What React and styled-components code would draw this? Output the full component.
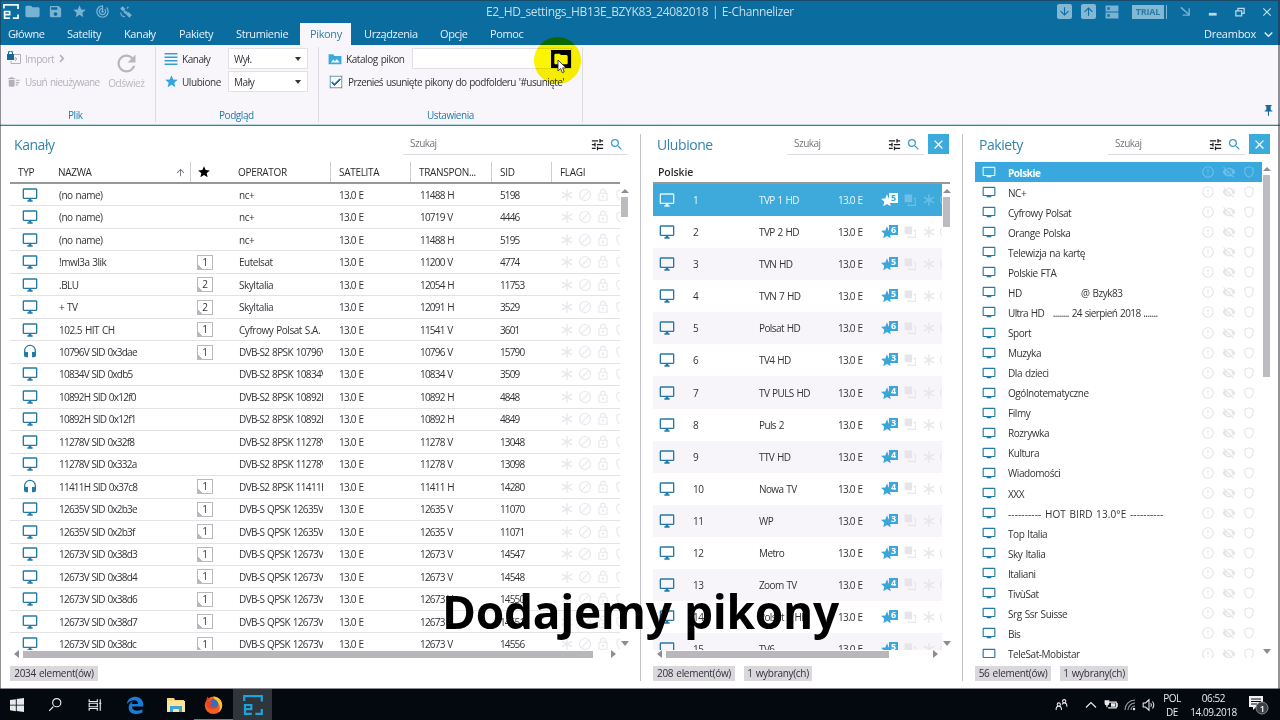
import React from "react"
import styled, { createGlobalStyle } from "styled-components"
import {
  MdFolder, MdSave, MdStar, MdTrackChanges, MdTune, MdSearch, MdClose, MdRefresh,
  MdOutlineLock, MdHeadset, MdVisibilityOff, MdErrorOutline, MdArrowDownward,
  MdArrowUpward, MdDeleteSweep, MdExpandMore, MdCheck, MdPushPin, MdOutlineShield,
} from "react-icons/md"

const GlobalStyle = createGlobalStyle`
  * {
    box-sizing: border-box;
  }
  body {
    margin: 0;
    overflow: hidden;
    font-family: "Open Sans", "Noto Sans", sans-serif;
    font-size: 10px;
    letter-spacing: -0.44px;
    word-spacing: 0.8px;
    color: #333338;
  }
  svg {
    display: block;
    flex: none;
  }
`;

const Screen = styled.div`
  position: relative;
  width: 1280px;
  height: 720px;
  display: flex;
  flex-direction: column;
  overflow: hidden;
  background: #fff;
  white-space: nowrap;
`;

const Frame = styled.div`
  position: absolute;
  inset: 0 0 31px 0;
  border: solid rgba(40, 40, 50, 0.5);
  border-width: 1px 2px 0 1px;
  pointer-events: none;
`;

/* title bar */

const TitleBar = styled.div`
  height: 23px;
  display: flex;
  align-items: center;
  background: #0b6c9f;
  color: #79b3d3;
`;

const QuickActions = styled.div`
  width: 486px;
  padding-left: 1px;
  display: grid;
  grid-template-columns: 20px repeat(5, 23.3px);
  align-items: center;
  justify-items: center;
`;

const WindowActions = styled.div`
  margin-left: auto;
  display: grid;
  grid-template-columns: 24px 24px 24px 48px 27px 27px 28px 26px;
  align-items: center;
  justify-items: center;
`;

const TitleText = styled.div`
  color: #c5deec;
  font-size: 12px;
  letter-spacing: -0.36px;
`;

const Mark = styled.span`
  color: ${({ $color }) => $color};
`;

const Key = styled.div`
  width: 15px;
  height: 15px;
  display: flex;
  align-items: center;
  justify-content: center;
  border-radius: 2px;
  background: #82b8d4;
  color: #0b6c9f;
`;

const Trial = styled.div`
  height: 14px;
  width: 32px;
  line-height: 14px;
  text-align: center;
  background: #82b8d4;
  color: #2c7ba6;
  font-weight: 700;
  font-size: 9px;
  letter-spacing: -0.2px;
  box-shadow: 2px 0 0 #0b6c9f, 3px 0 0 #82b8d4;
`;

/* ribbon tabs */

const TabBar = styled.div`
  height: 22px;
  display: grid;
  grid-template-columns: 57px 57px 55px 57px 74px 54px 76px 50px 1fr auto;
  background: #0b6c9f;
  color: #e4f0f7;
  font-size: 11px;
  letter-spacing: -0.38px;
  line-height: 22px;
`;

const Tab = styled.div`
  padding-left: ${({ $first }) => $first ? '8px' : '10px'};
  width: ${({ $active }) => $active ? '51px' : 'auto'};
  background: ${({ $active }) => $active ? '#f8f6fb' : 'transparent'};
  color: ${({ $active }) => $active ? '#2a80aa' : 'inherit'};
`;

const Profile = styled.div`
  display: flex;
  align-items: center;
  gap: 4px;
  padding-right: 3px;
  letter-spacing: -0.25px;
`;

/* ribbon */

const Ribbon = styled.div`
  height: 81px;
  display: flex;
  background: #f8f6fb;
  border-bottom: 1px solid #2c86ad;
  box-shadow: inset 0 -1px 0 #b9d6e3;
  padding-top: 2px;
`;

const Group = styled.div`
  width: ${({ $width }) => $width}px;
  height: 75px;
  padding-left: ${({ $left }) => $left}px;
  display: flex;
  flex-direction: column;
  justify-content: space-between;
  border-right: 1px solid #dddbe2;
`;

const GroupBody = styled.div`
  display: flex;
`;

const GroupLabel = styled.div`
  color: #1f7aa8;
  line-height: 13px;
  margin-left: ${({ $shift }) => $shift}px;
`;

const Lines = styled.div`
  display: flex;
  flex-direction: column;
`;

const Line = styled.div`
  height: 23px;
  display: flex;
  align-items: center;
  gap: 4px;
  color: ${({ $muted }) => $muted ? '#b3b0b8' : '#333338'};
`;

const BigButton = styled.div`
  margin: 0 2px 0 auto;
  padding-top: 3px;
  width: 54px;
  display: flex;
  flex-direction: column;
  align-items: center;
  color: #b8b6bc;
  line-height: 12px;
`;

const Caption = styled.span`
  width: ${({ $width }) => $width}px;
`;

const Select = styled.div`
  width: 80px;
  height: 21px;
  padding: 0 6px 0 5px;
  display: flex;
  align-items: center;
  justify-content: space-between;
  background: #fff;
  border: 1px solid #e2dfe6;
  &::after {
    content: "";
    border: 3px solid transparent;
    border-top: 4px solid #333;
    border-bottom: 0;
  }
`;

const PathInput = styled.div`
  width: 160px;
  height: 21px;
  display: flex;
  align-items: center;
  justify-content: flex-end;
  background: #fff;
  border: 1px solid #e2dfe6;
`;

const Browse = styled.div`
  width: 20px;
  height: 18px;
  flex: none;
  display: flex;
  align-items: center;
  justify-content: center;
  background: #000;
  color: #fff;
`;

const Check = styled.div`
  width: 14px;
  height: 14px;
  margin: 0 1px;
  display: flex;
  align-items: center;
  justify-content: center;
  background: #fff;
  border: 1px solid #dedbe3;
  color: #17699a;
`;

const CheckLabel = styled.span`
  letter-spacing: -0.55px;
`;

const PinSpot = styled.div`
  margin-left: auto;
  align-self: flex-end;
  padding: 0 5px 8px 0;
  color: #17699a;
`;

/* panels */

const Workspace = styled.div`
  height: 563px;
  display: flex;
  padding: 8px 0 7px;
  border-bottom: 1px solid #8d8d92;
`;

const Panel = styled.section`
  width: ${({ $width }) => $width}px;
  padding-left: ${({ $left }) => $left}px;
  display: flex;
  flex-direction: column;
  border-right: ${({ $last }) => $last ? '0' : '1px solid #c4c3c8'};
`;

const PanelHead = styled.div`
  height: 28px;
  display: flex;
  justify-content: space-between;
  padding-right: ${({ $right }) => $right}px;
`;

const PanelTitle = styled.h2`
  margin: 0;
  padding-left: 4px;
  font-size: 14px;
  font-weight: 400;
  line-height: 22px;
  color: #3384aa;
`;

const Tools = styled.div`
  display: flex;
  gap: 4px;
`;

const Search = styled.div`
  width: ${({ $width }) => $width}px;
  height: 21px;
  padding: 0 3px 0 7px;
  display: flex;
  align-items: center;
  gap: 4px;
  border-bottom: 1px solid #dcdadf;
  color: #77757b;
`;

const SearchText = styled.span`
  flex: 1;
  font-size: 10px;
  letter-spacing: -0.5px;
  margin-top: -2px;
`;

const Close = styled.div`
  width: 21px;
  height: 20px;
  display: flex;
  align-items: center;
  justify-content: center;
  background: #3baadd;
  color: #fff;
`;

const HeadRow = styled.div`
  height: 22px;
  width: ${({ $width }) => $width}px;
  display: flex;
  border-bottom: 2px solid #98979b;
  line-height: 20px;
  color: #2c2c30;
`;

const HeadCell = styled.div`
  width: ${({ $width }) => $width}px;
  padding-left: ${({ $left }) => $left}px;
  padding-right: 4px;
  border-left: ${({ $bar }) => $bar ? '1px solid #cfcdd3' : '0'};
  display: flex;
  align-items: center;
  justify-content: space-between;
  font-weight: ${({ $strong }) => $strong ? 600 : 500};
  font-size: ${({ $strong }) => $strong ? '10.5px' : '10px'};
  letter-spacing: ${({ $strong }) => $strong ? '-0.1px' : '-0.3px'};
`;

const Scroller = styled.div`
  height: ${({ $height }) => $height}px;
  display: flex;
`;

const List = styled.div`
  width: ${({ $width }) => $width}px;
  overflow: hidden;
`;

const ChannelRow = styled.div`
  height: 22.47px;
  display: grid;
  grid-template-columns: 49px 138px 42px 84px 16px 81px 80px 60px 60px;
  align-items: center;
  border-bottom: 1px solid #e3e2e6;
`;

const FavRow = styled.div`
  height: 32.08px;
  padding-left: 6px;
  display: grid;
  grid-template-columns: 34px 66px 79px 43px 23px 18px 17px 20px;
  align-items: center;
  background: ${({ $selected, $odd }) => $selected ? '#3eaadb' : $odd ? '#f8f5fa' : '#fff'};
  color: ${({ $selected }) => $selected ? '#eaf6fc' : '#333338'};
`;

const BouquetRow = styled.div`
  height: 20.07px;
  padding-left: 7px;
  display: grid;
  grid-template-columns: 26px 193px 21px 20px 20px;
  align-items: center;
  background: ${({ $selected }) => $selected ? '#38a8de' : '#fff'};
  color: ${({ $selected }) => $selected ? '#fff' : '#333338'};
  font-weight: ${({ $selected }) => $selected ? 700 : 400};
`;

const Cell = styled.span`
  overflow: hidden;
  white-space: pre;
  padding-top: ${({ $drop }) => $drop ? '1px' : '0'};
  letter-spacing: ${({ $spacing }) => $spacing || -0.44}px;
`;

const TypeIcon = styled.span`
  padding-left: ${({ $left }) => $left || 0}px;
  color: ${({ $selected }) => $selected ? '#e3f4fc' : '#2479a5'};
`;

const Flags = styled.span`
  display: flex;
  align-items: center;
  gap: 4px;
  color: #eae7ec;
`;

const Flag = styled.span`
  color: ${({ $selected }) => $selected ? '#6cbfe6' : '#e8e5ea'};
`;

const Count = styled.div`
  width: 16px;
  height: 15px;
  line-height: 13px;
  text-align: center;
  border: 1px solid #b9b8bd;
  background: linear-gradient(45deg, #b9b8bd 3px, transparent 3px);
`;

const Rating = styled.span`
  display: flex;
  width: 17px;
  height: 14px;
  color: ${({ $selected }) => $selected ? '#fff' : '#3aa6da'};
`;

const Digit = styled.span`
  width: 9px;
  height: 10px;
  margin-left: -4px;
  line-height: 10px;
  text-align: center;
  font-size: 9px;
  font-weight: 700;
  letter-spacing: 0;
  background: ${({ $selected }) => $selected ? '#fff' : '#3aa6da'};
  color: ${({ $selected }) => $selected ? '#3aa6da' : '#fff'};
  z-index: 1;
`;

const VBar = styled.div`
  width: 7px;
  margin-left: 1px;
  padding: 4px 0;
  display: flex;
  flex-direction: column;
  align-items: center;
`;

const VThumb = styled.div`
  width: 7px;
  height: ${({ $size }) => $size}px;
  margin: 3px 0 auto;
  background: #bdbbc0;
`;

const HBar = styled.div`
  height: 8px;
  width: ${({ $width }) => $width}px;
  padding-left: 3px;
  display: flex;
  align-items: center;
`;

const HThumb = styled.div`
  height: 7px;
  width: ${({ $size }) => $size}px;
  margin: 0 auto 0 2px;
  background: #b9b7bb;
`;

const Footer = styled.div`
  margin-top: auto;
  display: flex;
  gap: 9px;
`;

const Tag = styled.div`
  height: 15px;
  width: ${({ $width }) => $width}px;
  line-height: 15px;
  text-align: center;
  letter-spacing: -0.3px;
  background: #dad7dd;
`;

/* things floating over the window */

const Halo = styled.div`
  position: absolute;
  left: 534px;
  top: 37px;
  width: 47px;
  height: 47px;
  border-radius: 50%;
  background: #fbf600;
  mix-blend-mode: multiply;
`;

const Pointer = styled.svg`
  position: absolute;
  left: 557px;
  top: 59px;
`;

const Subtitle = styled.div`
  position: absolute;
  left: 442px;
  top: 579px;
  font-size: 46px;
  line-height: 64px;
  font-weight: 700;
  letter-spacing: -0.3px;
  color: #000;
`;

/* taskbar */

const Taskbar = styled.div`
  height: 31px;
  display: flex;
  justify-content: space-between;
  background: #04080f;
  color: #e8e9eb;
`;

const Apps = styled.div`
  display: flex;
`;

const TaskButton = styled.div`
  width: ${({ $width }) => $width}px;
  display: flex;
  align-items: center;
  justify-content: center;
  background: ${({ $active }) => $active ? '#30353c' : 'transparent'};
  border-bottom: ${({ $open }) => $open ? '1px solid #5f7f96' : '0'};
`;

const Tray = styled.div`
  display: grid;
  grid-template-columns: 30px 19px 20px 18px 18px 24px 59px 37px;
  align-items: center;
`;

const TrayText = styled.div`
  text-align: center;
  line-height: 14px;
  padding-top: 1px;
`;

const Glyph = ({ d, size = 14, height, box = "0 0 24 24", children }) => (
  <svg width={size} height={height || size} viewBox={box} fill="currentColor" preserveAspectRatio="none">
    {d && <path d={d} />}
    {children}
  </svg>
);

const Monitor = () => <Glyph size={16} d="M21 16H3V4h18m0-2H3c-1.1 0-2 .9-2 2v12a2 2 0 0 0 2 2h7v2H8v2h8v-2h-2v-2h7a2 2 0 0 0 2-2V4c0-1.1-.9-2-2-2z" />;

const Tv = () => <Glyph size={14} d="M21 3H3c-1.1 0-2 .9-2 2v12c0 1.1.9 2 2 2h5v2h8v-2h5c1.1 0 2-.9 2-2V5c0-1.1-.9-2-2-2zm0 14H3V5h18v12z" />;

const Asterisk = () => (
  <Glyph size={14}>
    <path d="M12 2v20M3.3 7l17.4 10M20.7 7L3.3 17" stroke="currentColor" strokeWidth="2.4" />
  </Glyph>
);

const Blocked = () => (
  <Glyph size={14}>
    <circle cx="12" cy="12" r="9.5" fill="none" stroke="currentColor" strokeWidth="2" />
    <path d="M5.5 18.5l13-13" stroke="currentColor" strokeWidth="2" />
  </Glyph>
);

const Copy = () => <Glyph size={13} d="M1 1h14v14H1zM18 7h4v15H7v-4h2v2h11V9h-2z" />;

const Arrow = ({ dir }) => {
  const d = { up: "M0 5l4-4 4 4z", down: "M0 1h8L4 6z", left: "M6 0v8L1 4z", right: "M1 0l5 4-5 4z" }[dir];
  return <svg width="8" height={dir === "up" || dir === "down" ? 6 : 8} fill="#8f8d93"><path d={d} /></svg>;
};

// frame with an open right side and a small "e" in its corner
const Logo = ({ size, height }) => (
  <Glyph size={size} height={height} box="0 0 20 20">
    <g fill="none" stroke="currentColor" strokeWidth="2.2">
      <path d="M1.2 6V1.2h17.6V6.5M18.8 14v4.8h-6.5" />
      <path d="M1.5 14.2h6.8V10H2v8.8h6.8" />
    </g>
  </Glyph>
);

const channels = [
  ["(no name)", "", "nc+", "11488 H", "5198"],
  ["(no name)", "", "nc+", "10719 V", "4446"],
  ["(no name)", "", "nc+", "11488 H", "5195"],
  ["!mwl3a 3lik", 1, "Eutelsat", "11200 V", "4774"],
  [".BLU", 2, "SkyItalia", "12054 H", "11753"],
  ["+ TV", 2, "SkyItalia", "12091 H", "3529"],
  ["102.5 HIT CH", 1, "Cyfrowy Polsat S.A.", "11541 V", "3601"],
  ["10796V SID 0x3dae", 1, "DVB-S2 8PSK 10796V", "10796 V", "15790", true],
  ["10834V SID 0xdb5", "", "DVB-S2 8PSK 10834V", "10834 V", "3509"],
  ["10892H SID 0x12f0", "", "DVB-S2 8PSK 10892H", "10892 H", "4848"],
  ["10892H SID 0x12f1", "", "DVB-S2 8PSK 10892H", "10892 H", "4849"],
  ["11278V SID 0x32f8", "", "DVB-S2 8PSK 11278V", "11278 V", "13048"],
  ["11278V SID 0x332a", "", "DVB-S2 8PSK 11278V", "11278 V", "13098"],
  ["11411H SID 0x37c8", 1, "DVB-S2 8PSK 11411H", "11411 H", "14280", true],
  ["12635V SID 0x2b3e", 1, "DVB-S QPSK 12635V", "12635 V", "11070"],
  ["12635V SID 0x2b3f", 1, "DVB-S QPSK 12635V", "12635 V", "11071"],
  ["12673V SID 0x38d3", 1, "DVB-S QPSK 12673V", "12673 V", "14547"],
  ["12673V SID 0x38d4", 1, "DVB-S QPSK 12673V", "12673 V", "14548"],
  ["12673V SID 0x38d6", 1, "DVB-S QPSK 12673V", "12673 V", "14550"],
  ["12673V SID 0x38d7", 1, "DVB-S QPSK 12673V", "12673 V", "14551"],
  ["12673V SID 0x38dc", 1, "DVB-S QPSK 12673V", "12673 V", "14556"],
];

const favourites = [
  ["TVP 1 HD", 5], ["TVP 2 HD", 6], ["TVN HD", 5], ["TVN 7 HD", 5], ["Polsat HD", 6],
  ["TV4 HD", 3], ["TV PULS HD", 4], ["Puls 2", 3], ["TTV HD", 4], ["Nowa TV", 4],
  ["WP", 3], ["Metro", 3], ["Zoom TV", 4], ["Polsat 2 HD", 6], ["TV6", 5],
];

// name, letter spacing where it differs from the rest
const bouquets = [
  ["Polskie"], ["NC+"], ["Cyfrowy Polsat"], ["Orange Polska"], ["Telewizja na kartę"], ["Polskie FTA"],
  ["HD                    @ Bzyk83"], ["Ultra HD   ........ 24 sierpień 2018 .......", -0.6], ["Sport"],
  ["Muzyka"], ["Dla dzieci"], ["Ogólnotematyczne"], ["Filmy"], ["Rozrywka"], ["Kultura"],
  ["Wiadomości"], ["XXX"], ["---------- HOT BIRD 13.0°E ----------", 0.12], ["Top Italia"],
  ["Sky Italia"], ["Italiani"], ["TivùSat"], ["Srg Ssr Suisse"], ["Bis"], ["TeleSat-Mobistar"],
];

const SearchBox = ({ width }) => (
  <Search $width={width}>
    <SearchText>Szukaj</SearchText>
    <MdTune size={15} color="#1e1e22" />
    <MdSearch size={15} color="#3a9fcd" />
  </Search>
);

function Header() {
  return (
    <>
      <TitleBar>
        <QuickActions>
          <Mark $color="#f3f8fb"><Logo size={16} height={15} /></Mark>
          <MdFolder size={17} />
          <MdSave size={15} />
          <MdStar size={15} />
          <MdTrackChanges size={15} />
          <Glyph size={14} d="M2 6l4-4 5 5-4 4zM12 16l4-4 6 5-4 5zM9 9l6 3-3 4-4-3zM15 2l2 2-3 3-1-1zM2 13h2a6 6 0 0 0 6 6v2a8 8 0 0 1-8-8z" />
        </QuickActions>
        <TitleText>E2_HD_settings_HB13E_BZYK83_24082018 | E-Channelizer</TitleText>
        <WindowActions>
          <Key><MdArrowDownward size={13} /></Key>
          <Key><MdArrowUpward size={13} /></Key>
          <Glyph size={14}><path d="M1 1h22v10H1zM1 13h22v10H1zM4 4v4h4V4zM4 16v4h4v-4z" fillRule="evenodd" /></Glyph>
          <Trial>TRIAL</Trial>
          <Glyph size={11}><path d="M2 3l18 16M20 5v15H6" fill="none" stroke="currentColor" strokeWidth="3" /></Glyph>
          <Glyph size={11}><path d="M4 18h17" stroke="#b9d8e8" strokeWidth="6" /></Glyph>
          <Glyph size={10}><path d="M2 9h14v12H2zM7 9V3h15v12h-6" fill="none" stroke="#b9d8e8" strokeWidth="3" /></Glyph>
          <MdClose size={14} color="#c5e0ee" stroke="#c5e0ee" />
        </WindowActions>
      </TitleBar>
      <TabBar>
        <Tab $first>Główne</Tab>
        <Tab>Satelity</Tab>
        <Tab>Kanały</Tab>
        <Tab>Pakiety</Tab>
        <Tab>Strumienie</Tab>
        <Tab $active>Pikony</Tab>
        <Tab>Urządzenia</Tab>
        <Tab>Opcje</Tab>
        <Tab>Pomoc</Tab>
        <Profile>Dreambox<MdExpandMore size={17} stroke="#e4f0f7" /></Profile>
      </TabBar>
    </>
  );
}

function RibbonBar() {
  return (
    <Ribbon>
      <Group $width={156} $left={7}>
        <GroupBody>
          <Lines>
            <Line $muted>
              <svg width="14" height="15" viewBox="0 0 14 15">
                <path d="M6 3.5h7.5v9H4V10" fill="none" stroke="#b3b0b8" />
                <path d="M5 8h5M8 6l2 2-2 2" fill="none" stroke="#b3b0b8" />
                <path d="M0 3h1V2a2.5 2.5 0 0 1 5 0v1h1v6H0zM2 3h3V2a1.5 1.5 0 0 0-3 0z" fill="#17699a" fillRule="evenodd" />
              </svg>
              <span>Import</span>
              <Glyph size={8} height={9}><path d="M6 3l10 9L6 21" fill="none" stroke="currentColor" strokeWidth="4.5" /></Glyph>
            </Line>
            <Line $muted><MdDeleteSweep size={14} /><CheckLabel>Usuń nieużywane</CheckLabel></Line>
          </Lines>
          <BigButton><MdRefresh size={27} />Odśwież</BigButton>
        </GroupBody>
        <GroupLabel $shift={61}>Plik</GroupLabel>
      </Group>
      <Group $width={163} $left={8}>
        <GroupBody>
          <Lines>
            <Line>
              <Glyph size={14}><path d="M1 3h22M1 9h22M1 15h22M1 21h22" stroke="#35a0cf" strokeWidth="2.2" /></Glyph>
              <Caption $width={42}>Kanały</Caption>
              <Select>Wył.</Select>
            </Line>
            <Line>
              <MdStar size={15} color="#35a6dc" style={{ marginRight: -1 }} />
              <Caption $width={42}>Ulubione</Caption>
              <Select>Mały</Select>
            </Line>
          </Lines>
        </GroupBody>
        <GroupLabel $shift={55}>Podgląd</GroupLabel>
      </Group>
      <Group $width={264} $left={9}>
        <Lines>
          <Line>
            <Glyph size={14}><path d="M1 4h8l2 3h12v14H1z" fill="#3aa9dc" /><path d="M5 18l4-5 3 3 3-4 5 6z" fill="#fff" /></Glyph>
            <Caption $width={62}>Katalog pikon</Caption>
            <PathInput><Browse><MdFolder size={16} /></Browse></PathInput>
          </Line>
          <Line>
            <Check><MdCheck size={12} stroke="currentColor" strokeWidth={2} /></Check>
            <CheckLabel>Przenieś usunięte pikony do podfolderu '#usunięte'</CheckLabel>
          </Line>
        </Lines>
        <GroupLabel $shift={99}>Ustawienia</GroupLabel>
      </Group>
      <PinSpot><MdPushPin size={13} /></PinSpot>
    </Ribbon>
  );
}

function Channels() {
  return (
    <Panel $width={641} $left={10}>
      <PanelHead $right={13}>
        <PanelTitle>Kanały</PanelTitle>
        <SearchBox width={224} />
      </PanelHead>
      <HeadRow $width={610}>
        <HeadCell $width={48} $left={8}>TYP</HeadCell>
        <HeadCell $width={132}>NAZWA<MdArrowUpward size={11} color="#77757b" /></HeadCell>
        <HeadCell $width={39} $left={6} $bar><MdStar size={14} color="#000" /></HeadCell>
        <HeadCell $width={101} $left={9}>OPERATOR</HeadCell>
        <HeadCell $width={80} $left={8} $bar>SATELITA</HeadCell>
        <HeadCell $width={81} $left={8} $bar>TRANSPON...</HeadCell>
        <HeadCell $width={60} $left={8} $bar>SID</HeadCell>
        <HeadCell $width={60} $left={8} $bar>FLAGI</HeadCell>
      </HeadRow>
      <Scroller $height={466}>
        <List $width={610}>
          {channels.map(([name, count, operator, transponder, sid, radio], i) => (
            <ChannelRow key={i}>
              <TypeIcon $left={12}>{radio ? <MdHeadset size={16} /> : <Monitor />}</TypeIcon>
              <Cell $spacing={name.includes("SID") ? -0.77 : -0.5}>{name}</Cell>
              <span>{count && <Count>{count}</Count>}</span>
              <Cell $spacing={operator.startsWith("DVB") ? -0.63 : -0.46}>{operator}</Cell>
              <span />
              <Cell $spacing={-0.76}>13.0 E</Cell>
              <Cell $spacing={-0.8}>{transponder}</Cell>
              <Cell $spacing={-0.85}>{sid}</Cell>
              <Flags><Asterisk /><Blocked /><MdOutlineLock size={14} /><MdOutlineShield size={14} /></Flags>
            </ChannelRow>
          ))}
        </List>
        <VBar><Arrow dir="up" /><VThumb $size={20} /><Arrow dir="down" /></VBar>
      </Scroller>
      <HBar $width={608}><Arrow dir="left" /><HThumb $size={570} /><Arrow dir="right" /></HBar>
      <Footer><Tag $width={88}>2034 element(ów)</Tag></Footer>
    </Panel>
  );
}

function Favourites() {
  return (
    <Panel $width={322} $left={12}>
      <PanelHead $right={13}>
        <PanelTitle>Ulubione</PanelTitle>
        <Tools>
          <SearchBox width={137} />
          <Close><MdClose size={15} stroke="#fff" /></Close>
        </Tools>
      </PanelHead>
      <HeadRow $width={297}><HeadCell $left={5} $strong>Polskie</HeadCell></HeadRow>
      <Scroller $height={466}>
        <List $width={289}>
          {favourites.map(([name, rating], i) => (
            <FavRow key={name} $selected={i === 0} $odd={i % 2 === 0}>
              <TypeIcon $selected={i === 0}><Monitor /></TypeIcon>
              <Cell>{i + 1}</Cell>
              <Cell $spacing={-0.6}>{name}</Cell>
              <Cell $spacing={-0.76}>13.0 E</Cell>
              <Rating $selected={i === 0}>
                <Glyph size={12} height={14} box="2 0 20 22" d="M12 17.3l6.200 3.700-1.600-7L22 9.200l-7.200-.6L12 2 9.200 8.600 2 9.200l5.500 4.700L5.800 21z" />
                <Digit $selected={i === 0}>{rating}</Digit>
              </Rating>
              <Flag $selected={i === 0}><Copy /></Flag>
              <Flag $selected={i === 0}><Asterisk /></Flag>
              <Flag $selected={i === 0}><Blocked /></Flag>
            </FavRow>
          ))}
        </List>
        <VBar><Arrow dir="up" /><VThumb $size={30} /><Arrow dir="down" /></VBar>
      </Scroller>
      <HBar $width={287}><Arrow dir="left" /><HThumb $size={223} /><Arrow dir="right" /></HBar>
      <Footer><Tag $width={82}>208 element(ów)</Tag><Tag $width={68}>1 wybrany(ch)</Tag></Footer>
    </Panel>
  );
}

function Bouquets() {
  return (
    <Panel $width={317} $left={12} $last>
      <PanelHead $right={10}>
        <PanelTitle>Pakiety</PanelTitle>
        <Tools>
          <SearchBox width={137} />
          <Close><MdClose size={15} stroke="#fff" /></Close>
        </Tools>
      </PanelHead>
      <Scroller $height={496}>
        <List $width={287}>
          {bouquets.map(([name, spacing], i) => (
            <BouquetRow key={name} $selected={i === 0}>
              <TypeIcon $selected={i === 0}><Tv /></TypeIcon>
              <Cell $drop $spacing={spacing}>{name}</Cell>
              <Flag $selected={i === 0}><MdErrorOutline size={14} /></Flag>
              <Flag $selected={i === 0}><MdVisibilityOff size={14} /></Flag>
              <Flag $selected={i === 0}><MdOutlineShield size={14} /></Flag>
            </BouquetRow>
          ))}
        </List>
        <VBar><Arrow dir="up" /><VThumb $size={202} /><Arrow dir="down" /></VBar>
      </Scroller>
      <Footer><Tag $width={76}>56 element(ów)</Tag><Tag $width={68}>1 wybrany(ch)</Tag></Footer>
    </Panel>
  );
}

function SystemBar() {
  return (
    <Taskbar>
      <Apps>
        <TaskButton $width={34}><Glyph size={14} d="M0 3.5L10 2v9.5H0zM11.5 1.8L24 0v11.5H11.5zM0 13h10v9.5L0 21zM11.5 13H24v11l-12.5-1.8z" /></TaskButton>
        <TaskButton $width={42}><Glyph size={14}><path d="M9 15L2 22M22 8a7 7 0 1 1-14 0 7 7 0 0 1 14 0z" fill="none" stroke="currentColor" strokeWidth="2" /></Glyph></TaskButton>
        <TaskButton $width={37}><Glyph size={14}><path d="M2 2v4h14V2M2 22v-4h14v4M2 9h14v6H2zM21 2v20M19 9h4" fill="none" stroke="currentColor" strokeWidth="2" /></Glyph></TaskButton>
        <TaskButton $width={44}><Glyph size={18}><path d="M1 11C2 4 7 1 12.5 1 19 1 23 6 23 11v3H8c0 4 3 5.500 7 5.500 3 0 5-.8 7-1.700V22c-2 1-4.500 2-8 2C7 24 3.500 20 3.500 15.500 3.500 12 5 9 9 7c-1 1.500-1.300 2.500-1.300 3.500H16c0-3-1.500-5-5-5C7 5.500 3.500 7.500 1 11z" fill="#1a7cd4" /></Glyph></TaskButton>
        <TaskButton $width={37}>
          <svg width="18" height="16" viewBox="0 0 18 16">
            <path d="M0 1h7l1 2h9v12H0z" fill="#f5d776" /><path d="M0 4h18v11H0z" fill="#fbe59a" />
            <path d="M3 9h12v6h-3v-3H6v3H3z" fill="#3fa4d6" />
          </svg>
        </TaskButton>
        <TaskButton $width={39} $open>
          <svg width="19" height="19" viewBox="0 0 24 24">
            <circle cx="12" cy="13" r="11" fill="#f4601c" />
            <path d="M12 2c6 0 11 5 11 11 0 4-2 7-5 9 2-3 3-6 1-10-2-4-6-5-7-10z" fill="#ffc52e" />
            <path d="M3 7l1-5c1 2 3 3 4 3z" fill="#e8361f" />
            <circle cx="12" cy="11.5" r="6" fill="#2f6fc4" />
            <path d="M3 8c3-1 6 0 8 2l-3 2c0 3 4 4 8 2-2 5-9 6-13 0z" fill="#f0401f" />
          </svg>
        </TaskButton>
        <TaskButton $width={39} $active><Mark $color="#1fa2dc"><Logo size={20} height={20} /></Mark></TaskButton>
      </Apps>
      <Tray>
        <Glyph size={13}><path d="M2 22c0-5 2-7 5-7s5 2 5 7M10 12a3 3 0 1 1-6 0 3 3 0 0 1 6 0zM13 12c1-2 2-3 4-3 3 0 5 2 5 7M20 6a3 3 0 1 1-6 0 3 3 0 0 1 6 0z" fill="none" stroke="currentColor" strokeWidth="2" /></Glyph>
        <Glyph size={12}><path d="M2 17L12 7l10 10" fill="none" stroke="currentColor" strokeWidth="2.4" /></Glyph>
        <Glyph size={14}><path d="M7 7h14v10H7M22 10h2v4h-2" fill="none" stroke="currentColor" strokeWidth="2" /><path d="M12 9h7v6h-7zM1 4h8v5a4 4 0 0 1-3 4v3H4v-3a4 4 0 0 1-3-4z" /></Glyph>
        <Glyph size={12}><path d="M2 22A20 20 0 0 1 22 2M8 22A14 14 0 0 1 22 8M14 22a8 8 0 0 1 8-8" fill="none" stroke="#9a9da2" strokeWidth="2.2" /><circle cx="20" cy="20" r="2.5" /></Glyph>
        <Glyph size={14}><path d="M2 8.5h4L12 3v18l-6-5.5H2zM15 9c1.5 2 1.5 4 0 6M18 6c3 4 3 8 0 12" fill="none" stroke="currentColor" strokeWidth="1.8" /></Glyph>
        <TrayText>POL<br />DE</TrayText>
        <TrayText>06:52<br />14.09.2018</TrayText>
        <svg width="20" height="20" viewBox="0 0 20 20" style={{ marginLeft: 6 }}>
          <path d="M0 1h14v11H7l-3 3v-3H0z" fill="#f2f2f3" />
          <path d="M2 4h10M2 6.5h10M2 9h6" stroke="#04080f" />
          <circle cx="13" cy="13" r="6" fill="#3b3f45" stroke="#85888c" />
          <text x="13" y="16.5" fontSize="9" fontWeight="600" textAnchor="middle" fill="#fff">1</text>
        </svg>
      </Tray>
    </Taskbar>
  );
}

export default function App() {
  return (
    <>
      <GlobalStyle />
      <Screen>
        <Header />
        <RibbonBar />
        <Workspace>
          <Channels />
          <Favourites />
          <Bouquets />
        </Workspace>
        <SystemBar />
        <Frame />
        <Halo />
        <Pointer width="10" height="15" viewBox="0 0 10 15">
          <path d="M1 1v11l2.600-2.500 1.700 4.200 2-.8-1.700-4H9z" fill="#fff" stroke="#222" strokeWidth=".8" />
        </Pointer>
        <Subtitle>Dodajemy pikony</Subtitle>
      </Screen>
    </>
  );
}
